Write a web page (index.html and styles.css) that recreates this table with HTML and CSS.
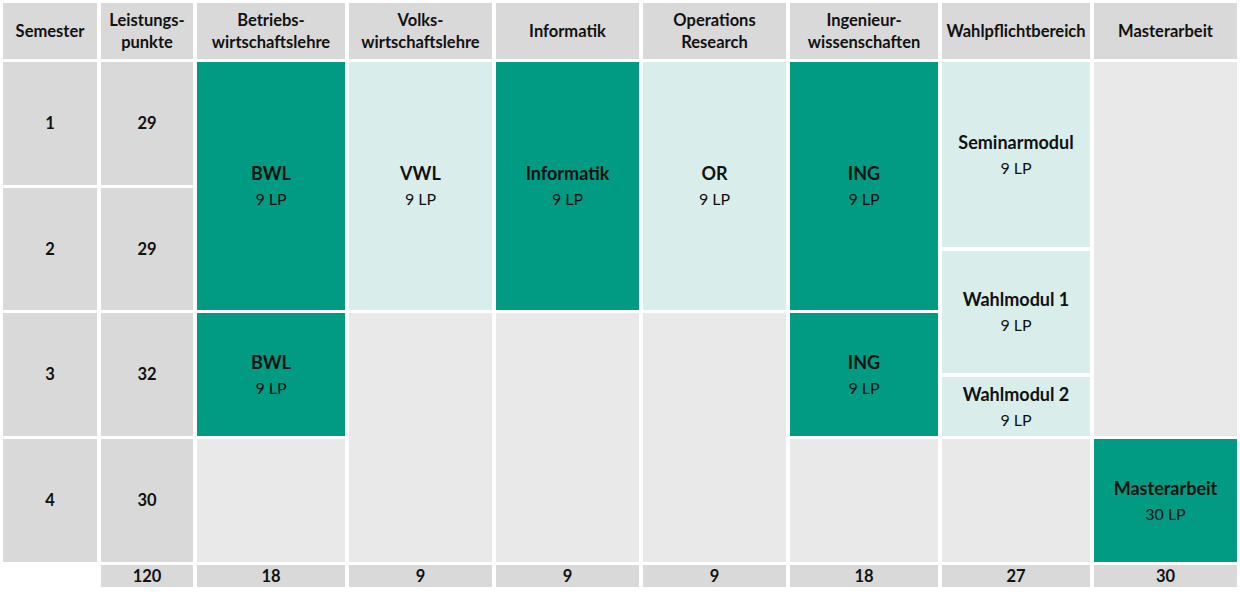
FILE: index.html
```html
<!DOCTYPE html>
<html lang="de">
<head>
<meta charset="utf-8">
<title>Studienplan Master</title>
<link rel="stylesheet" href="styles.css">
</head>
<body>
<div class="plan">
  <div class="cell head c1">Semester</div>
  <div class="cell head c2">Leistungs-<br>punkte</div>
  <div class="cell head c3">Betriebs-<br>wirtschaftslehre</div>
  <div class="cell head c4">Volks-<br>wirtschaftslehre</div>
  <div class="cell head c5">Informatik</div>
  <div class="cell head c6">Operations<br>Research</div>
  <div class="cell head c7">Ingenieur-<br>wissenschaften</div>
  <div class="cell head c8">Wahlpflichtbereich</div>
  <div class="cell head c9">Masterarbeit</div>

  <div class="cell num r1 c1">1</div>
  <div class="cell num r2 c1">2</div>
  <div class="cell num r3 c1">3</div>
  <div class="cell num r4 c1">4</div>

  <div class="cell num r1 c2">29</div>
  <div class="cell num r2 c2">29</div>
  <div class="cell num r3 c2">32</div>
  <div class="cell num r4 c2">30</div>

  <div class="cell dark r12 c3"><b>BWL</b><span>9 LP</span></div>
  <div class="cell dark r3 c3"><b>BWL</b><span>9 LP</span></div>
  <div class="cell empty r4 c3"></div>

  <div class="cell mint r12 c4"><b>VWL</b><span>9 LP</span></div>
  <div class="cell empty r34 c4"></div>

  <div class="cell dark r12 c5"><b>Informatik</b><span>9 LP</span></div>
  <div class="cell empty r34 c5"></div>

  <div class="cell mint r12 c6"><b>OR</b><span>9 LP</span></div>
  <div class="cell empty r34 c6"></div>

  <div class="cell dark r12 c7"><b>ING</b><span>9 LP</span></div>
  <div class="cell dark r3 c7"><b>ING</b><span>9 LP</span></div>
  <div class="cell empty r4 c7"></div>

  <div class="stack r123 c8">
    <div class="cell mint seminar"><b>Seminarmodul</b><span>9 LP</span></div>
    <div class="cell mint wm1"><b>Wahlmodul 1</b><span>9 LP</span></div>
    <div class="cell mint wm2"><b>Wahlmodul 2</b><span>9 LP</span></div>
  </div>
  <div class="cell empty r4 c8"></div>

  <div class="cell empty r123 c9"></div>
  <div class="cell dark r4 c9"><b>Masterarbeit</b><span>30 LP</span></div>

  <div class="cell foot c2">120</div>
  <div class="cell foot c3">18</div>
  <div class="cell foot c4">9</div>
  <div class="cell foot c5">9</div>
  <div class="cell foot c6">9</div>
  <div class="cell foot c7">18</div>
  <div class="cell foot c8">27</div>
  <div class="cell foot c9">30</div>
</div>
</body>
</html>
```
FILE: styles.css
```css
html, body {
  margin: 0;
  padding: 0;
  background: #ffffff;
}

body {
  font-family: "Lato", "Open Sans", sans-serif;
  color: #111111;
}

.plan {
  display: grid;
  grid-template-columns: 94px 92px 148px 143px 143px 143px 148px 148px 143px;
  grid-template-rows: 56px 123px 122px 123px 123px 22px;
  column-gap: 4px;
  row-gap: 3px;
  padding: 3px;
  width: max-content;
}

.cell {
  display: flex;
  flex-direction: column;
  align-items: center;
  justify-content: center;
  text-align: center;
  font-size: 16px;
  line-height: 25px;
}

.cell b {
  font-weight: 700;
  font-size: 18px;
}

.cell span {
  font-weight: 400;
  font-size: 16px;
}

.head {
  background: #d9d9d9;
  font-weight: 700;
  font-size: 16.5px;
  line-height: 22px;
  grid-row: 1;
}

.num {
  background: #d9d9d9;
  font-weight: 700;
  font-size: 16.5px;
}

.foot {
  background: #d9d9d9;
  font-weight: 700;
  font-size: 16.5px;
  line-height: 22px;
  grid-row: 6;
}

.dark {
  background: #009b82;
}

.mint {
  background: #d9eeea;
}

.empty {
  background: #e9e9e9;
}

.c1 { grid-column: 1; }
.c2 { grid-column: 2; }
.c3 { grid-column: 3; }
.c4 { grid-column: 4; }
.c5 { grid-column: 5; }
.c6 { grid-column: 6; }
.c7 { grid-column: 7; }
.c8 { grid-column: 8; }
.c9 { grid-column: 9; }

.r1 { grid-row: 2; }
.r2 { grid-row: 3; }
.r3 { grid-row: 4; }
.r4 { grid-row: 5; }
.r12 { grid-row: 2 / 4; }
.r34 { grid-row: 4 / 6; }
.r123 { grid-row: 2 / 5; }

.stack {
  display: flex;
  flex-direction: column;
  gap: 4px;
}

.seminar { height: 185px; }
.wm1 { height: 122px; }
.wm2 { flex: 1; }
```
